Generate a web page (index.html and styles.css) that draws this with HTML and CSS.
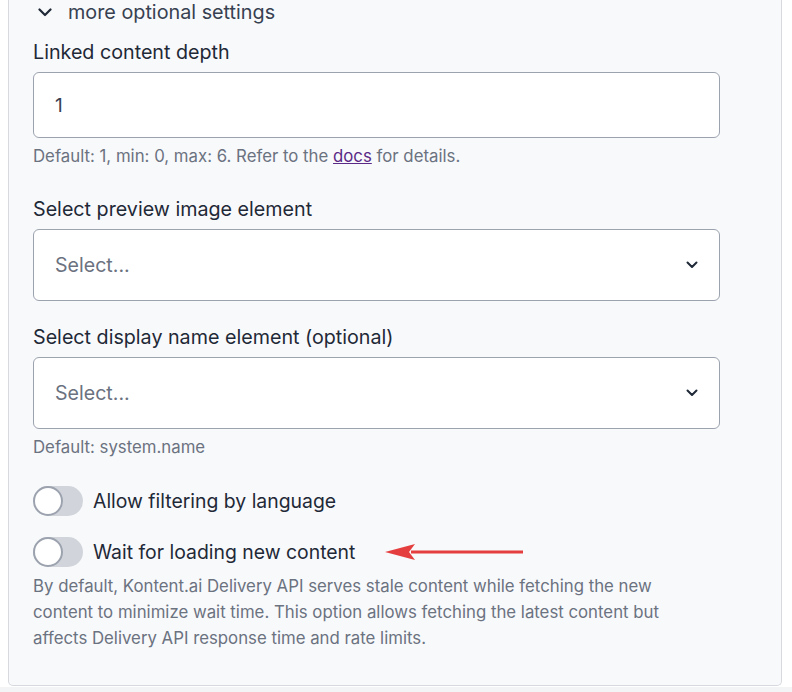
FILE: index.html
```html
<!DOCTYPE html>
<html>
<head>
<meta charset="utf-8">
<link rel="stylesheet" href="styles.css">
</head>
<body>
<div class="panel">
  <div class="summary">
    <svg class="chev" width="14" height="9" viewBox="0 0 14 9"><path d="M1.5 1.5 L7 7 L12.5 1.5" fill="none" stroke="#1f2937" stroke-width="2.2" stroke-linecap="round" stroke-linejoin="round"/></svg>
    <span>more optional settings</span>
  </div>

  <div class="field">
    <div class="label">Linked content depth</div>
    <div class="input">1</div>
    <div class="help">Default: 1, min: 0, max: 6. Refer to the <a href="#" class="link">docs</a> for details.</div>
  </div>

  <div class="field f2">
    <div class="label">Select preview image element</div>
    <div class="input select"><span class="ph">Select...</span>
      <svg width="12" height="8" viewBox="0 0 12 8"><path d="M1.5 1.5 L6 6 L10.5 1.5" fill="none" stroke="#1f2937" stroke-width="2" stroke-linecap="round" stroke-linejoin="round"/></svg>
    </div>
  </div>

  <div class="field f3">
    <div class="label">Select display name element (optional)</div>
    <div class="input select"><span class="ph">Select...</span>
      <svg width="12" height="8" viewBox="0 0 12 8"><path d="M1.5 1.5 L6 6 L10.5 1.5" fill="none" stroke="#1f2937" stroke-width="2" stroke-linecap="round" stroke-linejoin="round"/></svg>
    </div>
    <div class="help">Default: system.name</div>
  </div>

  <div class="toggle t1"><span class="track"><span class="knob"></span></span><span>Allow filtering by language</span></div>
  <div class="toggle t2"><span class="track"><span class="knob"></span></span><span>Wait for loading new content</span>
    <svg class="arrow" width="140" height="16" viewBox="0 0 140 16"><path d="M26 6.5 H138 V9.5 H26 Z" fill="#e53e3e"/><path d="M0 8 L30 0 L24 8 L30 16 Z" fill="#e53e3e"/></svg>
  </div>
  <p class="desc">By default, Kontent.ai Delivery API serves stale content while fetching the new content to minimize wait time. This option allows fetching the latest content but affects Delivery API response time and rate limits.</p>
</div>
<div class="strip"></div>
</body>
</html>
```
FILE: styles.css
```css
html, body { margin: 0; padding: 0; background: #ffffff; }
body { font-family: Inter, "Liberation Sans", sans-serif; color: #1f2937; }
.panel {
  margin: 0 10px 0 8px;
  background: #f8f9fb;
  border: 1px solid #d7d9de;
  border-top: none;
  border-radius: 0 0 5px 5px;
  padding: 0 24px 34px 24px;
}
.summary { display: flex; align-items: center; height: 24px; font-size: 19.8px; color: #374151; }
.chev { margin-left: 5px; margin-right: 16px; }
.field { display: flex; flex-direction: column; }
.label { font-size: 19.7px; line-height: 24px; margin-top: 16px; color: #1f2937; }
.input {
  margin-top: 8px; width: 687px; box-sizing: border-box; height: 66px;
  background: #fff; border: 1px solid #9ca3af; border-radius: 6px;
  display: flex; align-items: center; padding: 0 21px; font-size: 19px; color: #374151;
}
.select { height: 72px; justify-content: space-between; font-size: 19.6px; }
.ph { color: #6b7280; }
.help { margin-top: 8px; font-size: 16.8px; line-height: 20px; color: #6b7280; }
.link { color: #5b2a86; }
.f2 .label { margin-top: 31px; }
.f3 .label { margin-top: 24px; }
.toggle { display: flex; align-items: center; gap: 10px; font-size: 19.4px; color: #1f2937; }
.t1 { margin-top: 29px; }
.t2 { margin-top: 21px; }
.track { width: 50px; height: 30px; border-radius: 15px; background: #d1d5db; position: relative; display: inline-block; }
.knob { position: absolute; left: 0; top: 0; width: 30px; height: 30px; box-sizing: border-box; border-radius: 50%; background: #fff; border: 2px solid #9ca3af; }
.arrow { margin-left: 20px; }
.desc { margin: 6px 0 0; font-size: 16.8px; line-height: 26px; color: #6b7280; max-width: 660px; }
.strip { height: 6px; background: #f3f4f6; margin-top: 1px; }
```
